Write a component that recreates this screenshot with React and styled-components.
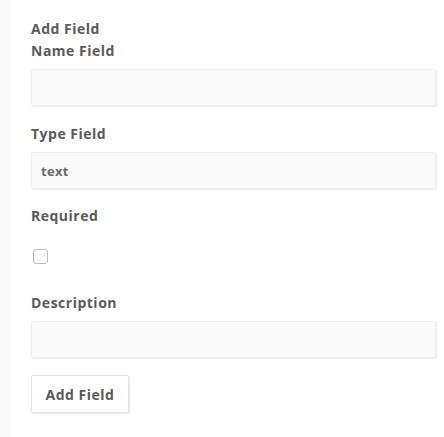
import styled, { createGlobalStyle } from 'styled-components'

const Global = createGlobalStyle`
  body {
    margin: 0;
    background: #ffffff;
    font-family: "Open Sans", Lato, sans-serif;
  }
`

const Page = styled.div`
  min-height: 437px;
  display: flex;
`

const Gutter = styled.div`
  width: 11px;
  background: #fafafa;
`

const Form = styled.form`
  flex: 1;
  padding: 18px 8px 0 20px;
  display: flex;
  flex-direction: column;
`

const Heading = styled.div`
  font-size: 14px;
  font-weight: 700;
  line-height: 22px;
  letter-spacing: 0.5px;
  color: #5a5a5a;
`

const Label = styled.label`
  font-size: 14px;
  font-weight: 700;
  line-height: 22px;
  letter-spacing: 0.5px;
  color: #5a5a5a;
  margin-top: ${({ $gap }) => $gap || 0}px;
`

const Input = styled.input`
  box-sizing: border-box;
  height: 37px;
  margin-top: 7px;
  padding: 0 9px;
  background: #fafafa;
  border: 1px solid #efefef;
  border-radius: 2px;
  box-shadow: 1px 1px 2px rgba(0, 0, 0, 0.08);
  font-family: inherit;
  font-size: 13px;
  font-weight: 700;
  letter-spacing: 0.3px;
  color: #6a6a6a;
  outline: none;
`

const Check = styled.input`
  width: 15px;
  height: 15px;
  margin: 22px 0 0 2px;
  appearance: none;
  border: 1px solid #bdbdbd;
  border-radius: 3px;
  background: #fff;
`

const Button = styled.button`
  align-self: flex-start;
  box-sizing: border-box;
  width: 98px;
  height: 38px;
  margin-top: 17px;
  background: #fff;
  border: 1px solid #e2e2e2;
  border-radius: 2px;
  box-shadow: 1px 1px 2px rgba(0, 0, 0, 0.1);
  font-family: inherit;
  font-size: 14px;
  font-weight: 700;
  letter-spacing: 0.5px;
  color: #5a5a5a;
`

export default function App() {
  return (
    <>
      <Global />
      <Page>
        <Gutter />
        <Form onSubmit={e => e.preventDefault()}>
          <Heading>Add Field</Heading>
          <Label>Name Field</Label>
          <Input type="text" />
          <Label $gap={17}>Type Field</Label>
          <Input type="text" defaultValue="text" readOnly />
          <Label $gap={16}>Required</Label>
          <Check type="checkbox" />
          <Label $gap={28}>Description</Label>
          <Input type="text" />
          <Button type="submit">Add Field</Button>
        </Form>
      </Page>
    </>
  )
}
